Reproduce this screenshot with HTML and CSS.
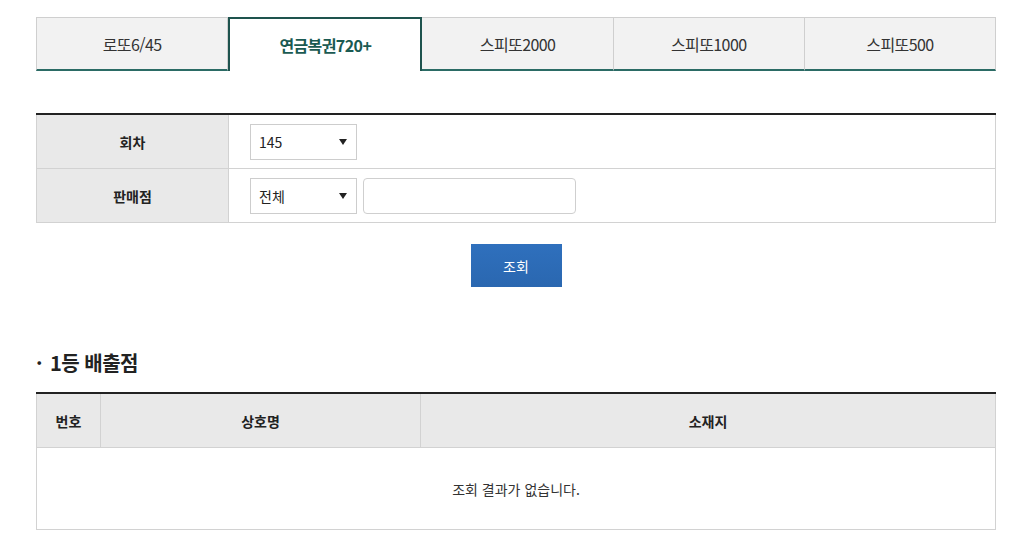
FILE: index.html
```html
<!DOCTYPE html>
<html lang="ko">

<head>
  <meta charset="UTF-8">
  <meta name="viewport" content="width=device-width, initial-scale=1.0">
  <title>당첨판매점 조회</title>
  <link rel="stylesheet" href="styles.css">
</head>

<body>
<div class="container">
  <ul class="tabs">
    <li class="tab">로또6/45</li>
    <li class="tab active">연금복권720+</li>
    <li class="tab">스피또2000</li>
    <li class="tab">스피또1000</li>
    <li class="tab">스피또500</li>
  </ul>

  <table class="search">
    <tr>
      <th>회차</th>
      <td>
        <div class="select"><span>145</span><i class="caret"></i></div>
      </td>
    </tr>
    <tr>
      <th>판매점</th>
      <td>
        <div class="select"><span>전체</span><i class="caret"></i></div><input type="text" class="keyword">
      </td>
    </tr>
  </table>

  <div class="btn-wrap">
    <button class="btn">조회</button>
  </div>

  <h3 class="title"><span class="dot">·</span>1등 배출점</h3>

  <table class="result">
    <colgroup>
      <col class="col-no">
      <col class="col-name">
      <col>
    </colgroup>
    <tr>
      <th>번호</th>
      <th>상호명</th>
      <th>소재지</th>
    </tr>
    <tr>
      <td colspan="3" class="empty">조회 결과가 없습니다.</td>
    </tr>
  </table>
</div>
</body>
</html>
```

FILE: styles.css
```css
html,
body {
  margin: 0;
  font-family: 'Noto Sans CJK KR', 'Noto Sans', sans-serif;
  background-color: #fff;
  color: #333;
}
.container {
  width: 960px;
  padding: 17px 0 0 36px;
}
ul, h3 {
  margin: 0;
  padding: 0;
}

/* tabs */
.tabs {
  display: flex;
  list-style: none;
  height: 54px;
}
.tab {
  flex: 1;
  display: flex;
  align-items: center;
  justify-content: center;
  background-color: #f2f2f2;
  border: 1px solid #cfcfcf;
  border-left: none;
  border-bottom: 2px solid #2b6b65;
  font-size: 16px;
  letter-spacing: -0.6px;
  color: #333;
}
.tab:first-child {
  border-left: 1px solid #cfcfcf;
}
.tab.active {
  background-color: #fff;
  border: 2px solid #1e534e;
  border-bottom: none;
  color: #1a5a52;
  font-weight: 700;
}

/* search form */
.search {
  width: 100%;
  margin-top: 42px;
  border-collapse: collapse;
  border-top: 2px solid #222;
}
.search th,
.search td {
  height: 53px;
  border: 1px solid #d2d2d2;
  padding: 0;
}
.search tr:first-child th,
.search tr:first-child td {
  border-top: none;
}
.search th {
  width: 191px;
  background-color: #e9e9e9;
  font-size: 14px;
  font-weight: 700;
  color: #222;
}
.search td {
  padding-left: 21px;
}
.search td > * {
  vertical-align: middle;
}
.select {
  display: inline-flex;
  align-items: center;
  justify-content: space-between;
  box-sizing: border-box;
  width: 107px;
  height: 36px;
  padding: 0 9px 0 8px;
  border: 1px solid #cdcdcd;
  background-color: #fff;
  font-size: 14px;
  color: #222;
}
.caret {
  width: 0;
  height: 0;
  border-left: 4px solid transparent;
  border-right: 4px solid transparent;
  border-top: 6px solid #222;
}
.keyword {
  box-sizing: border-box;
  width: 213px;
  height: 36px;
  margin: 0 0 0 6px;
  border: 1px solid #cfcfcf;
  border-radius: 4px;
}

/* button */
.btn-wrap {
  display: flex;
  justify-content: center;
  margin-top: 21px;
}
.btn {
  width: 91px;
  height: 43px;
  border: none;
  background: linear-gradient(#2f70bd, #2a67b0);
  color: #fff;
  font-family: inherit;
  font-size: 14px;
}

/* results */
.title {
  margin-top: 61px;
  font-size: 20px;
  font-weight: 700;
  color: #222;
  letter-spacing: -0.5px;
}
.dot {
  display: inline-block;
  width: 14px;
}
.result {
  width: 100%;
  margin-top: 15px;
  border-collapse: collapse;
  border-top: 2px solid #222;
  table-layout: fixed;
}
.col-no {
  width: 64px;
}
.col-name {
  width: 320px;
}
.result th,
.result td {
  border: 1px solid #d2d2d2;
  padding: 0;
  font-size: 14px;
}
.result th {
  height: 53px;
  background-color: #e9e9e9;
  border-top: none;
  font-weight: 700;
  color: #222;
}
.empty {
  height: 81px;
  text-align: center;
  color: #333;
}
```
